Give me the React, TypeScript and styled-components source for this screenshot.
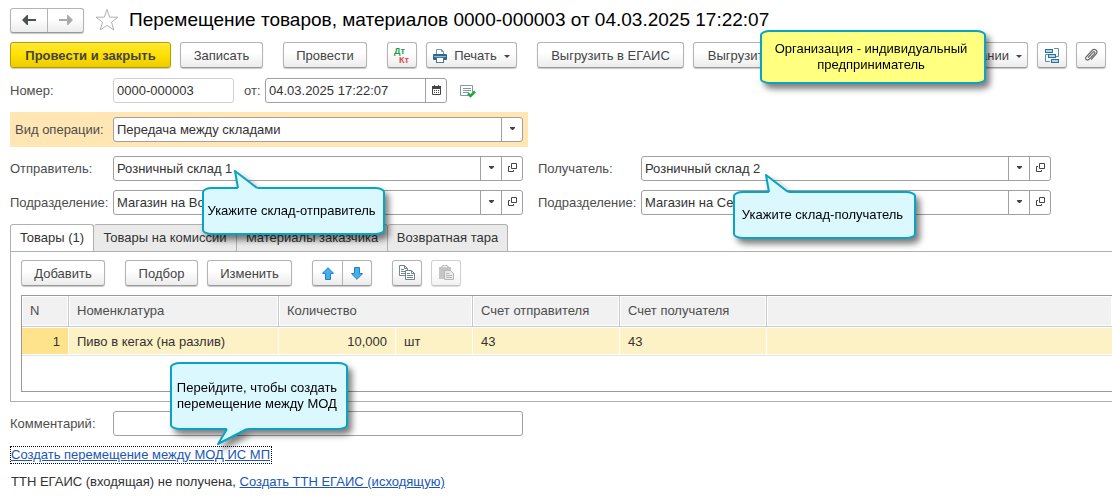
import React from "react";
import styled, { createGlobalStyle, css } from "styled-components";

const Global = createGlobalStyle`
  * { box-sizing: border-box; }
  body { margin: 0; background: #fff; }
  body, button, input, select, table {
    font-family: "Liberation Sans", Arial, sans-serif;
    font-size: 13px;
    line-height: 16px;
    color: #333;
  }
  svg { display: block; flex: none; }
`;

const Page = styled.main`
  display: flex;
  flex-direction: column;
  padding: 8px 0 10px 10px;
  overflow: hidden;
`;

const TitleBar = styled.header`
  display: flex;
  align-items: center;
  height: 24px;
`;

const Title = styled.h1`
  margin: 0 0 0 10px;
  font-size: 19px;
  line-height: 24px;
  font-weight: 400;
  color: #000;
  white-space: nowrap;
`;

const raised = css`
  border: 1px solid #b3b3b3;
  border-bottom-color: #9a9a9a;
  border-radius: 3px;
  background: linear-gradient(#fff 40%, #ececec);
  box-shadow: 0 1px 1px rgba(0, 0, 0, 0.22);
`;

const ButtonGroup = styled.div`
  display: flex;
  height: 25px;
  overflow: hidden;
  ${raised}
`;

const GroupButton = styled.button<{ $w: number }>`
  display: flex;
  align-items: center;
  justify-content: center;
  width: ${(p) => p.$w}px;
  padding: 0;
  border: 0;
  background: none;
  & + & {
    border-left: 1px solid #b3b3b3;
  }
`;

const StarButton = styled.button`
  margin-left: 11px;
  padding: 0;
  border: 0;
  background: none;
`;

const Toolbar = styled.div`
  position: relative;
  display: flex;
  align-items: center;
  margin-top: 10px;
  padding-right: 6px;
`;

const Button = styled.button<{ $w?: number; $gap?: number; $primary?: boolean }>`
  display: flex;
  align-items: center;
  justify-content: center;
  gap: 7px;
  flex: none;
  height: 26px;
  width: ${(p) => (p.$w ? `${p.$w}px` : "auto")};
  margin-left: ${(p) => p.$gap ?? 0}px;
  padding: 0;
  color: #444;
  white-space: nowrap;
  ${raised}
  ${(p) =>
    p.$primary &&
    css`
      border-color: #b59d00;
      background: linear-gradient(#ffe83a, #ffe000 50%, #eccb00);
      font-weight: 700;
    `}
  &:not([aria-label]) {
    padding-top: 2px;
  }
  &:disabled {
    opacity: 0.6;
  }
`;

const Spacer = styled.div`
  flex: 1;
`;

const Form = styled.div`
  display: grid;
  grid-template-columns: minmax(0, 1fr) minmax(0, 1fr);
  gap: 9px 15px;
  padding-right: 61px;
`;

const Row = styled.div`
  position: relative;
  display: flex;
  align-items: center;
  grid-column-start: 1;
`;

const RightRow = styled(Row)`
  grid-column-start: 2;
`;

const HeaderRow = styled(Row)`
  margin-top: 10px;
`;

const OperationRow = styled(Row)`
  margin-right: -5px;
  padding: 5px;
  background: #ffe6b3;
`;

const Label = styled.label<{ $w?: number; $gap?: number }>`
  flex: none;
  width: ${(p) => p.$w ?? 103}px;
  margin-left: ${(p) => p.$gap ?? 0}px;
  color: #4d4d4d;
  white-space: nowrap;
`;

const Field = styled.div<{ $w?: number; $light?: boolean }>`
  display: flex;
  flex: ${(p) => (p.$w ? `0 0 ${p.$w}px` : "1 1 0")};
  min-width: 0;
  height: 25px;
  border: 1px solid ${(p) => (p.$light ? "#d0d0d0" : "#a0a0a0")};
  border-radius: 3px;
  background: #fff;
`;

const textBox = css`
  flex: 1;
  width: 100%;
  min-width: 0;
  padding: 0 3px;
  border: 0;
  outline: 0;
  background: none;
  color: #333;
`;

const Input = styled.input`
  ${textBox}
`;

const SelectWrap = styled.div`
  position: relative;
  display: flex;
  flex: 1;
  min-width: 0;
`;

const Select = styled.select`
  ${textBox}
  appearance: none;
`;

const Arrow = styled.span`
  position: absolute;
  top: 0;
  right: 0;
  bottom: 0;
  display: flex;
  align-items: center;
  justify-content: center;
  width: 21px;
  padding-bottom: 2px;
  border-left: 1px solid #a0a0a0;
  pointer-events: none;
`;

const FieldButton = styled.button`
  display: flex;
  align-items: center;
  justify-content: center;
  flex: none;
  width: 21px;
  padding: 0 0 2px;
  border: 0;
  border-left: 1px solid #a0a0a0;
  background: none;
`;

const PlainButton = styled.button`
  margin-left: 13px;
  padding: 2px 0 0;
  border: 0;
  background: none;
`;

const Tabs = styled.div`
  display: flex;
  margin-top: 9px;
`;

const Tab = styled.button<{ $w: number; $active?: boolean }>`
  width: ${(p) => p.$w}px;
  height: 28px;
  margin-bottom: -1px;
  padding: 0;
  border: 1px solid #b0b0b0;
  border-left-width: ${(p) => (p.$active ? 1 : 0)}px;
  border-bottom-color: ${(p) => (p.$active ? "#fff" : "#b0b0b0")};
  border-radius: 3px 3px 0 0;
  background: ${(p) => (p.$active ? "#fff" : "#eaeaea")};
  white-space: nowrap;
`;

const Panel = styled.section`
  padding: 8px 0 9px 10px;
  border: 1px solid #b0b0b0;
  border-right: 0;
`;

const PanelTools = styled.div`
  display: flex;
`;

const MoveGroup = styled(ButtonGroup)`
  height: 26px;
  margin-left: 20px;
`;

const TableFrame = styled.div`
  height: 97px;
  margin-top: 9px;
  border: 1px solid #999;
  border-right: 0;
`;

const Table = styled.table`
  width: 100%;
  table-layout: fixed;
  border-collapse: separate;
  border-spacing: 0;
  th,
  td {
    padding: 0 8px;
    text-align: left;
    font-weight: 400;
    white-space: nowrap;
    background-clip: padding-box;
  }
  th {
    height: 31px;
    color: #4d4d4d;
    background: #f1f1f1;
    border-right: 1px solid #c8c8c8;
    border-bottom: 1px solid #c8c8c8;
    box-shadow: inset 0 0 0 1px #fff;
  }
  td {
    height: 29px;
    padding-top: 2px;
    background: #fdf1c6;
    border-right: 1px solid #fff;
    border-bottom: 1px solid #e4e4e4;
    box-shadow: inset 0 1px #fff, inset 0 -1px #fff;
  }
  th:last-child,
  td:last-child {
    border-right: 0;
  }
  td:first-child {
    background-color: #ffe38c;
  }
`;

const NumberCell = styled.td`
  && {
    text-align: right;
  }
`;

const CommentRow = styled(Row)`
  margin-top: 9px;
`;

const Footer = styled.footer`
  display: flex;
  flex-direction: column;
  align-items: flex-start;
  gap: 10px;
  margin-top: 10px;
`;

const Anchor = styled.div`
  position: relative;
`;

const Link = styled.a<{ $focused?: boolean }>`
  display: inline-block;
  color: #1a56b8;
  text-decoration: underline;
  ${(p) =>
    p.$focused &&
    css`
      padding-right: 1px;
      border: 1px dotted #000;
    `}
`;

const FooterText = styled.p`
  margin: 0 1px;
`;

type Place = { $x: number; $y: number; $w: number; $h: number; $yellow?: boolean };

const Bubble = styled.div<Place>`
  position: absolute;
  z-index: 2;
  left: ${(p) => p.$x}px;
  top: ${(p) => p.$y}px;
  width: ${(p) => p.$w}px;
  height: ${(p) => p.$h}px;
  display: flex;
  align-items: center;
  justify-content: center;
  padding: 0 4px 1px 0;
  border: 2px solid #08a4c4;
  border-radius: 10px / 5px;
  background: ${(p) => (p.$yellow ? "#ffff80" : "#dbf8ff")};
  color: #000;
  text-align: center;
  white-space: nowrap;
  filter: drop-shadow(4px 5px 3px rgba(0, 0, 0, 0.5));
`;

const Tail = styled.svg<{ $down?: boolean }>`
  position: absolute;
  left: ${(p) => (p.$down ? 44 : 29)}px;
  ${(p) => (p.$down ? "top: 100%;" : "bottom: 100%;")}
`;

const TailUp = () => (
  <Tail width="32" height="20" viewBox="0 0 32 20">
    <path d="M5 20 2 2 25 20Z" fill="#dbf8ff" />
    <path d="M5 19 2 2 24 19" fill="none" stroke="#08a4c4" strokeWidth="2" strokeLinejoin="round" />
  </Tail>
);

const TailDown = () => (
  <Tail $down width="36" height="18" viewBox="0 0 36 18">
    <path d="M11 0 2 16 32 0Z" fill="#dbf8ff" />
    <path d="M11 1 2 16 31 1" fill="none" stroke="#08a4c4" strokeWidth="2" strokeLinejoin="round" />
  </Tail>
);

const Caret = () => (
  <svg width="6" height="3" viewBox="0 0 6 3">
    <path d="M0 0H6L3 3Z" fill="#444" />
  </svg>
);

const SmallCaret = () => (
  <svg width="5" height="3" viewBox="0 0 5 3">
    <path d="M0 0H5V1L3 3H2L0 1Z" fill="#444" />
  </svg>
);

const ArrowLeft = () => (
  <svg width="14" height="10" viewBox="0 0 14 10">
    <path d="M0 5 5 0H6V4H14V6H6V10H5Z" fill="#4a5250" />
  </svg>
);

const ArrowRight = () => (
  <svg width="14" height="10" viewBox="0 0 14 10">
    <path d="M14 5 9 0H8V4H0V6H8V10H9Z" fill="#aaa" />
  </svg>
);

const Star = () => (
  <svg width="24" height="24" viewBox="0 0 24 24" fill="none" stroke="#b0b0b0">
    <path d="M12 1.500 14.700 9.200H23L16.500 14.200 18.800 22 12 17.300 5.200 22 7.500 14.200 1 9.200H9.300Z" />
  </svg>
);

const DtKt = () => (
  <svg width="18" height="18" viewBox="0 0 18 18" fontFamily="Liberation Sans, sans-serif" fontWeight="700" fontSize="9">
    <text x="1" y="8" fill="#1f9a48">Дт</text>
    <text x="6" y="17" fill="#e04848">Кт</text>
  </svg>
);

const Printer = () => (
  <svg width="14" height="14" viewBox="0 0 14 14">
    <path d="M3.500 5V.500H8.500L10.500 2.500V5" fill="#fff" stroke="#7895a8" />
    <path d="M8.500.500V2.500H10.500" fill="none" stroke="#7895a8" />
    <rect x="0" y="5" width="14" height="6" rx="1" fill="#2b6a8f" />
    <path d="M1 7.500H13" stroke="#8fb9d0" />
    <rect x="3.500" y="8.500" width="7" height="5" fill="#fff" stroke="#54788f" />
  </svg>
);

const Structure = () => (
  <svg width="14" height="15" viewBox="0 0 14 15" fill="#b4d4e8" stroke="#2f6f96">
    <path d="M3 6.500H.500V13.500H5M9 .500H13.500V8.500H11" fill="none" stroke="#5d8eac" />
    <rect x=".500" y="1.500" width="7" height="3" />
    <rect x="3.500" y="6.500" width="7" height="3" />
    <rect x="6.500" y="11.500" width="7" height="3" />
  </svg>
);

const Clip = () => (
  <svg width="14" height="14" viewBox="0 0 14 14" fill="none" stroke="#6a6a6a" strokeWidth="1.200">
    <path d="M4 9.500 9 4.200C10.300 3 11.500 4.500 10.500 5.600L5 11.300C3.200 13 .600 11 2.200 8.900L8 2.500C10.500 0 14.500 2.800 12.200 5.900L7 11.500" />
  </svg>
);

const Calendar = () => (
  <svg width="9" height="10" viewBox="0 0 9 10">
    <path d="M.500 2.500H8.500V9.500H.500Z" fill="#fff" stroke="#444" />
    <path d="M0 1H9V4H0ZM2 0H3V2H2ZM6 0H7V2H6Z" fill="#444" />
    <path d="M2 5.500H8M2 7.500H8" stroke="#444" strokeDasharray="1 1" />
  </svg>
);

const DocCheck = () => (
  <svg width="16" height="13" viewBox="0 0 16 13" fill="none">
    <path d="M8 10.500H.500V.500H12.500V7" stroke="#8199a8" />
    <path d="M3 3.500H11M3 5.500H11M3 7.500H9" stroke="#8199a8" />
    <path d="M8 8.500 10.500 11 15 6.500" stroke="#22a83c" strokeWidth="2.500" />
  </svg>
);

const OpenIcon = () => (
  <svg width="9" height="9" viewBox="0 0 9 9" fill="none" stroke="#444">
    <path d="M3.500.500H8.500V5.500H3.500ZM2 3.500H.500V8.500H5.500V7" />
  </svg>
);

const BlueArrow = ({ down }: { down?: boolean }) => (
  <svg width="12" height="13" viewBox="0 0 12 13">
    <path
      d={down ? "M6 12.300 11.300 7V6.500H8.500V.500H3.500V6.500H.700V7Z" : "M6 .700.700 6V6.500H3.500V12.500H8.500V6.500H11.300V6Z"}
      fill="#3fb0f0"
      stroke="#2a7fb8"
    />
  </svg>
);

const Copy = () => (
  <svg width="16" height="16" viewBox="0 0 16 16" fill="#fff" stroke="#6f8794">
    <path d="M.500.500H5.500L8.500 3.500V10.500H.500ZM5.500.500V3.500H8.500M2 4.500H5M2 6.500H6M2 8.500H6" />
    <path d="M6.500 5.500H12.500L15.500 8.500V14.500H6.500ZM12.500 5.500V8.500H15.500M8 8.500H11M8 10.500H14M8 12.500H14" />
  </svg>
);

const Paste = () => (
  <svg width="15" height="16" viewBox="0 0 15 16">
    <path d="M0 2H12V14H0Z" fill="#a0a0a0" />
    <path d="M3 3V1H4L5 0H7L8 1H9V3Z" fill="#ddd" stroke="#888" />
    <path d="M5.500 5.500H11.500L14.500 8.500V14.500H5.500Z" fill="#ddd" stroke="#888" />
    <path d="M7 8.500H10M7 10.500H13M7 12.500H13" stroke="#888" />
  </svg>
);

function Choice({ id, value, open = true }: { id: string; value: string; open?: boolean }) {
  return (
    <Field>
      <SelectWrap>
        <Select id={id} defaultValue={value}>
          <option>{value}</option>
        </Select>
        <Arrow>
          <SmallCaret />
        </Arrow>
      </SelectWrap>
      {open && (
        <FieldButton aria-label="Открыть">
          <OpenIcon />
        </FieldButton>
      )}
    </Field>
  );
}

export default function App() {
  return (
    <>
      <Global />
      <Page>
        <TitleBar>
          <ButtonGroup>
            <GroupButton $w={36} aria-label="Назад"><ArrowLeft /></GroupButton>
            <GroupButton $w={36} aria-label="Вперед"><ArrowRight /></GroupButton>
          </ButtonGroup>
          <StarButton aria-label="В избранное"><Star /></StarButton>
          <Title>Перемещение товаров, материалов 0000-000003 от 04.03.2025 17:22:07</Title>
        </TitleBar>

        <Toolbar>
          <Button $primary $w={161}>Провести и закрыть</Button>
          <Button $w={83} $gap={9}>Записать</Button>
          <Button $w={84} $gap={20}>Провести</Button>
          <Button $w={30} $gap={20} aria-label="Проводки"><DtKt /></Button>
          <Button $w={91} $gap={9}><Printer />Печать<Caret /></Button>
          <Button $w={147} $gap={20}>Выгрузить в ЕГАИС</Button>
          <Button $w={92} $gap={9}>Выгрузить</Button>
          <Spacer />
          <Button $w={160}>Создать на основании<Caret /></Button>
          <Button $w={30} $gap={9} aria-label="Структура подчиненности"><Structure /></Button>
          <Button $w={30} $gap={9} aria-label="Файлы"><Clip /></Button>
          <Bubble $yellow $x={750} $y={-12} $w={226} $h={54}>
            Организация - индивидуальный<br />предприниматель
          </Bubble>
        </Toolbar>

        <Form>
          <HeaderRow>
            <Label htmlFor="number">Номер:</Label>
            <Field $w={121} $light><Input id="number" defaultValue="0000-000003" /></Field>
            <Label htmlFor="date" $w={21} $gap={10}>от:</Label>
            <Field $w={182}>
              <Input id="date" defaultValue="04.03.2025 17:22:07" />
              <FieldButton aria-label="Выбрать дату"><Calendar /></FieldButton>
            </Field>
            <PlainButton aria-label="Статус документа"><DocCheck /></PlainButton>
          </HeaderRow>
          <OperationRow>
            <Label htmlFor="operation" $w={98}>Вид операции:</Label>
            <Choice id="operation" value="Передача между складами" open={false} />
          </OperationRow>
          <Row>
            <Label htmlFor="sender">Отправитель:</Label>
            <Choice id="sender" value="Розничный склад 1" />
            <Bubble $x={192} $y={31} $w={183} $h={48}>
              <TailUp />Укажите склад-отправитель
            </Bubble>
          </Row>
          <RightRow>
            <Label htmlFor="receiver">Получатель:</Label>
            <Choice id="receiver" value="Розничный склад 2" />
            <Bubble $x={195} $y={35} $w={183} $h={48}>
              <TailUp />Укажите склад-получатель
            </Bubble>
          </RightRow>
          <Row>
            <Label htmlFor="senderUnit">Подразделение:</Label>
            <Choice id="senderUnit" value="Магазин на Волжской" />
          </Row>
          <RightRow>
            <Label htmlFor="receiverUnit">Подразделение:</Label>
            <Choice id="receiverUnit" value="Магазин на Северной" />
          </RightRow>
        </Form>

        <Tabs role="tablist">
          <Tab role="tab" aria-selected $active $w={84}>Товары (1)</Tab>
          <Tab role="tab" $w={143}>Товары на комиссии</Tab>
          <Tab role="tab" $w={151}>Материалы заказчика</Tab>
          <Tab role="tab" $w={120}>Возвратная тара</Tab>
        </Tabs>
        <Panel>
          <PanelTools>
            <Button $w={84}>Добавить</Button>
            <Button $w={73} $gap={20}>Подбор</Button>
            <Button $w={85} $gap={9}>Изменить</Button>
            <MoveGroup>
              <GroupButton $w={29} aria-label="Вверх"><BlueArrow /></GroupButton>
              <GroupButton $w={29} aria-label="Вниз"><BlueArrow down /></GroupButton>
            </MoveGroup>
            <Button $w={30} $gap={20} aria-label="Копировать"><Copy /></Button>
            <Button $w={30} $gap={9} disabled aria-label="Вставить"><Paste /></Button>
          </PanelTools>
          <TableFrame>
            <Table>
              <colgroup>
                <col width="47" />
                <col width="210" />
                <col width="117" />
                <col width="77" />
                <col width="147" />
                <col width="147" />
                <col />
              </colgroup>
              <thead>
                <tr>
                  <th>N</th>
                  <th>Номенклатура</th>
                  <th colSpan={2}>Количество</th>
                  <th>Счет отправителя</th>
                  <th>Счет получателя</th>
                  <th />
                </tr>
              </thead>
              <tbody>
                <tr>
                  <NumberCell>1</NumberCell>
                  <td>Пиво в кегах (на разлив)</td>
                  <NumberCell>10,000</NumberCell>
                  <td>шт</td>
                  <td>43</td>
                  <td>43</td>
                  <td />
                </tr>
              </tbody>
            </Table>
          </TableFrame>
        </Panel>

        <Form>
          <CommentRow>
            <Label htmlFor="comment">Комментарий:</Label>
            <Field><Input id="comment" /></Field>
          </CommentRow>
        </Form>

        <Footer>
          <Anchor>
            <Link $focused href="#transfer">Создать перемещение между МОД ИС МП</Link>
            <Bubble $x={160} $y={-84} $w={178} $h={68}>
              Перейдите, чтобы создать<br />перемещение между МОД<TailDown />
            </Bubble>
          </Anchor>
          <FooterText>
            ТТН ЕГАИС (входящая) не получена, <Link href="#ttn">Создать ТТН ЕГАИС (исходящую)</Link>
          </FooterText>
        </Footer>
      </Page>
    </>
  );
}
